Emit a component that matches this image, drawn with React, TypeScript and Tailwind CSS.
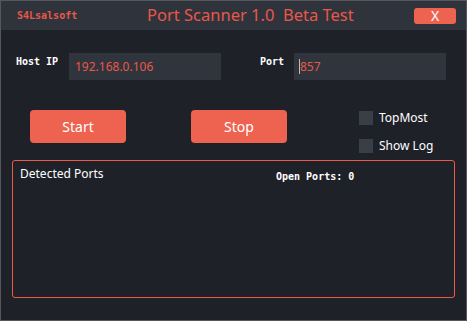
import React from "react"

const mono = { fontFamily: '"DejaVu Sans Mono", "Liberation Mono", monospace' }

export default function App() {
  return (
    <div
      className="w-[467px] h-[321px] border border-[#55575c] bg-[#1f2129] flex flex-col overflow-hidden"
      style={{ fontFamily: '"Noto Sans", "Open Sans", sans-serif' }}
    >
      {/* Title bar */}
      <div className="h-[29px] bg-[#2f333b] flex items-center pl-[16px] pr-[10px] shrink-0">
        <span className="text-[10px] font-bold text-[#e8584a] w-[130px]" style={mono}>S4Lsalsoft</span>
        <span className="text-[16.5px] text-[#e8584a] whitespace-pre leading-none">Port Scanner 1.0  Beta Test</span>
        <button className="ml-auto w-[42px] h-[16px] rounded-[3px] bg-[#ee6350] text-white text-[14px] leading-none flex items-center justify-center">
          X
        </button>
      </div>

      {/* Inputs */}
      <div className="flex items-start pt-[23px] pl-[15px]">
        <span className="text-[10px] font-bold text-white w-[53px] pt-[1px]" style={mono}>Host IP</span>
        <div className="w-[152px] h-[27px] bg-[#30343c] flex items-center pl-[6px] text-[12px] text-[#e8584a]">
          192.168.0.106
        </div>
        <span className="text-[10px] font-bold text-white ml-[39px] w-[34px] pt-[1px]" style={mono}>Port</span>
        <div className="w-[152px] h-[27px] bg-[#30343c] flex items-center pl-[5px] text-[12px] text-[#e8584a]">
          <span className="w-[1px] h-[15px] bg-[#bbbbbb]" />
          857
        </div>
      </div>

      {/* Buttons and options */}
      <div className="flex items-start pt-[30px] pl-[29px]">
        <button className="w-[96px] h-[33px] rounded-[4px] bg-[#ee6350] text-white text-[14px]">Start</button>
        <button className="w-[96px] h-[33px] rounded-[4px] bg-[#ee6350] text-white text-[14px] ml-[65px]">Stop</button>
        <div className="flex flex-col gap-[10px] ml-[72px] -mt-[1px]">
          <label className="flex items-center gap-[6px] text-[12px] text-white">
            <span className="w-[14px] h-[14px] bg-[#3a3e46]" />
            TopMost
          </label>
          <label className="flex items-center gap-[6px] text-[12px] text-white">
            <span className="w-[14px] h-[14px] bg-[#3a3e46]" />
            Show Log
          </label>
        </div>
      </div>

      {/* Detected ports panel */}
      <div className="mx-[11px] mt-[5px] h-[138px] border border-[#ee5a48] rounded-[3px] flex items-start pt-[4px] pl-[7px]">
        <span className="text-[12px] text-white w-[256px]">Detected Ports</span>
        <span className="text-[10px] font-bold text-white pt-[4px]" style={mono}>Open Ports: 0</span>
      </div>
    </div>
  )
}
